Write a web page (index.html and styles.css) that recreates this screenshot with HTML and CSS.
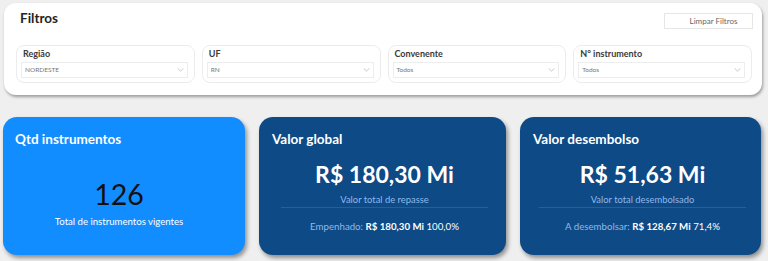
FILE: index.html
```html
<!DOCTYPE html>
<html lang="pt-BR">
<head>
<meta charset="utf-8">
<title>Filtros</title>
<link rel="stylesheet" href="styles.css">
</head>
<body>
<section class="panel">
  <div class="panel-head">
    <h1 class="panel-title">Filtros</h1>
    <button class="clear-btn">Limpar Filtros</button>
  </div>
  <div class="filters">
    <div class="filter">
      <div class="filter-label">Região</div>
      <div class="select"><span class="select-value">NORDESTE</span><svg class="chev" viewBox="0 0 8 5" width="7" height="4"><path d="M0.5 0.5 L4 4 L7.5 0.5" fill="none" stroke="#a8a8a8" stroke-width="0.8"/></svg></div>
    </div>
    <div class="filter">
      <div class="filter-label">UF</div>
      <div class="select"><span class="select-value">RN</span><svg class="chev" viewBox="0 0 8 5" width="7" height="4"><path d="M0.5 0.5 L4 4 L7.5 0.5" fill="none" stroke="#a8a8a8" stroke-width="0.8"/></svg></div>
    </div>
    <div class="filter">
      <div class="filter-label">Convenente</div>
      <div class="select"><span class="select-value">Todos</span><svg class="chev" viewBox="0 0 8 5" width="7" height="4"><path d="M0.5 0.5 L4 4 L7.5 0.5" fill="none" stroke="#a8a8a8" stroke-width="0.8"/></svg></div>
    </div>
    <div class="filter">
      <div class="filter-label">N° instrumento</div>
      <div class="select"><span class="select-value">Todos</span><svg class="chev" viewBox="0 0 8 5" width="7" height="4"><path d="M0.5 0.5 L4 4 L7.5 0.5" fill="none" stroke="#a8a8a8" stroke-width="0.8"/></svg></div>
    </div>
  </div>
</section>

<section class="cards">
  <div class="card card-light">
    <h2 class="card-title">Qtd instrumentos</h2>
    <div class="count">126</div>
    <div class="count-sub">Total de instrumentos vigentes</div>
  </div>
  <div class="card card-dark">
    <h2 class="card-title">Valor global</h2>
    <div class="value">R$ 180,30 Mi</div>
    <div class="value-sub">Valor total de repasse</div>
    <div class="divider"></div>
    <div class="foot"><span class="foot-label">Empenhado:</span> <b>R$ 180,30 Mi</b> 100,0%</div>
  </div>
  <div class="card card-dark">
    <h2 class="card-title">Valor desembolso</h2>
    <div class="value">R$ 51,63 Mi</div>
    <div class="value-sub">Valor total desembolsado</div>
    <div class="divider"></div>
    <div class="foot"><span class="foot-label">A desembolsar:</span> <b>R$ 128,67 Mi</b> 71,4%</div>
  </div>
</section>
</body>
</html>
```

FILE: styles.css
```css
* { box-sizing: border-box; }
html, body { margin: 0; padding: 0; }
body {
  background: #efefef;
  font-family: "Lato", "Noto Sans", sans-serif;
  width: 768px;
  height: 261px;
  overflow: hidden;
  padding-top: 3px;
}
.panel {
  margin: 0 6px 0 4px;
  height: 92px;
  background: #fff;
  border-radius: 12px;
  box-shadow: 1px 2px 3px rgba(0,0,0,0.35);
  padding: 5.5px 9px 0 12px;
}
.panel-head {
  display: flex;
  justify-content: space-between;
  align-items: flex-start;
  height: 36.5px;
}
.panel-title {
  margin: 0 0 0 4px;
  font-size: 13.5px;
  line-height: 18px;
  font-weight: 700;
  color: #252423;
}
.clear-btn {
  margin-top: 4.5px;
  width: 89px;
  height: 16px;
  background: #fff;
  border: 1px solid #e6e6e6;
  font-family: "Lato", sans-serif;
  font-size: 8px;
  color: #666;
  padding: 0 0 0 10px;
  line-height: 14px;
}
.filters {
  display: flex;
  gap: 7px;
  padding-right: 1px;
}
.filter {
  flex: 1;
  height: 38px;
  border: 1px solid #ececec;
  border-radius: 8px;
  padding: 1.5px 6px 0 4px;
}
.filter-label {
  font-size: 9px;
  line-height: 12px;
  font-weight: 700;
  color: #3a3a3a;
  padding-left: 2px;
}
.select {
  margin-top: 2.5px;
  height: 15.5px;
  border: 1px solid #ededed;
  display: flex;
  align-items: center;
  justify-content: space-between;
  padding: 0 3px 0 3px;
}
.select-value {
  font-size: 6.5px;
  color: #777;
}
.chev { display: block; }

.cards {
  margin: 22px 6px 0 3px;
  display: grid;
  grid-template-columns: 242px 247px 241px;
  gap: 14px;
}
.card {
  height: 138px;
  border-radius: 14px;
  box-shadow: 2px 3px 4px rgba(0,0,0,0.4);
  display: flex;
  flex-direction: column;
  align-items: center;
  color: #fff;
  padding: 13px 0 0 0;
}
.card-light { background: #118dff; padding-right: 10px; }
.card-dark { background: #0d4a86; padding-left: 4px; }
.card-title {
  align-self: flex-start;
  margin: 0 0 0 12px;
  font-size: 13.5px;
  line-height: 18px;
  font-weight: 700;
}
.card-dark .card-title { margin-left: 9px; }
.count {
  margin-top: 30px;
  font-size: 28.5px;
  line-height: 32px;
  color: #111;
}
.count-sub {
  margin-top: 5px;
  font-size: 9.6px;
  line-height: 13px;
}
.value {
  margin-top: 12px;
  font-size: 23px;
  line-height: 28px;
  font-weight: 700;
}
.value-sub {
  margin-top: 5px;
  font-size: 9.4px;
  line-height: 13px;
  color: #8fb9ea;
}
.divider {
  width: 207px;
  height: 1px;
  background: #24609f;
  margin-top: 1px;
}
.foot {
  margin-top: 12px;
  font-size: 9.7px;
  line-height: 13px;
}
.foot-label { color: #8fb9ea; }
.foot b { font-weight: 700; }
```
